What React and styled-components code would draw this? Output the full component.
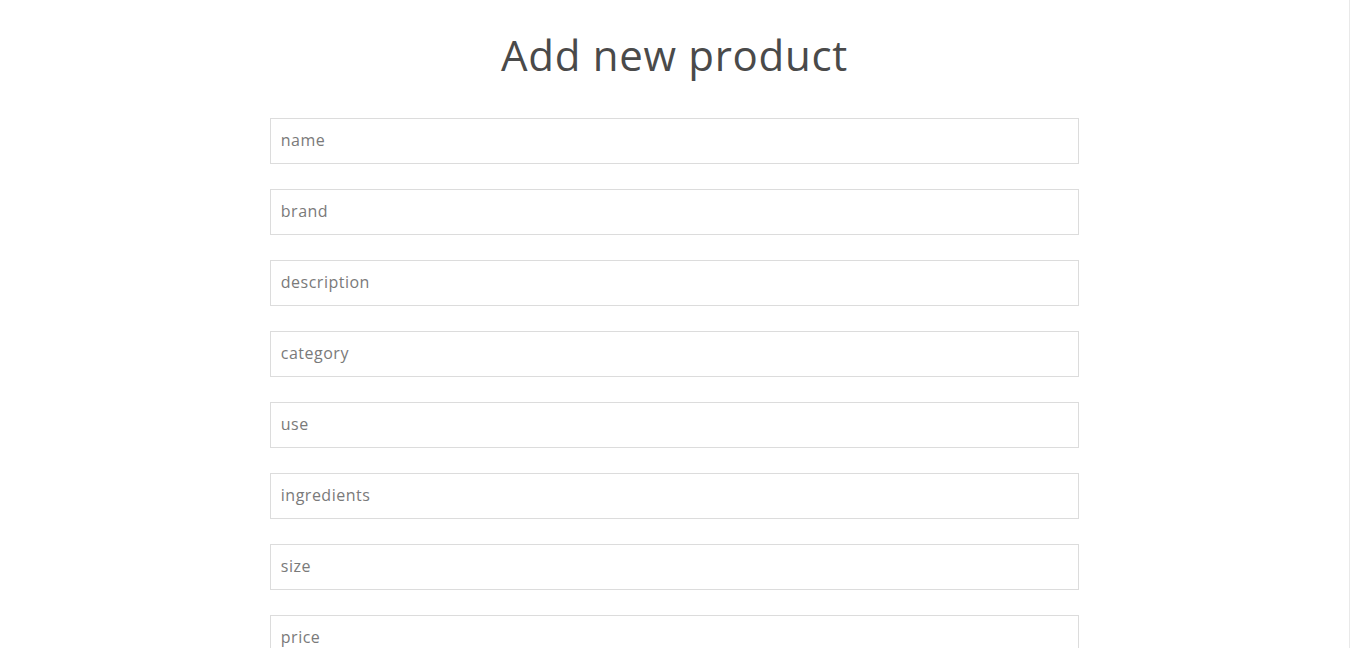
import React from 'react'
import styled, { createGlobalStyle } from 'styled-components'

const GlobalStyle = createGlobalStyle`
    body {
        margin: 0;
        font-family: "Open Sans", "Noto Sans", sans-serif;
        background: #ffffff;
    }
`;

const Page = styled.div`
    min-height: 100vh;
    border-right: 1px solid #e9e9e9;
    box-sizing: border-box;
`;

const Title = styled.h1`
    margin: 0;
    padding-top: 27px;
    font-size: 42px;
    font-weight: 400;
    line-height: 56px;
    color: #4a4a4a;
    text-align: center;
    letter-spacing: 0.7px;
`;

const Form = styled.form`
    width: 60%;
    margin: 35px auto 0;
    display: flex;
    flex-direction: column;
    gap: 25px;
    padding-bottom: 40px;
`;

const Input = styled.input`
    height: 46px;
    box-sizing: border-box;
    border: 1px solid #dcdcdc;
    padding: 0 10px 2px;
    font-family: "Open Sans", "Noto Sans", sans-serif;
    font-size: 16px;
    letter-spacing: 0.5px;
    color: #444;
    outline: none;

    &::placeholder {
        color: #7a7a7a;
    }
`;

const Button = styled.button`
    height: 46px;
    border: none;
    background: #4a4a4a;
    color: #fff;
    font-size: 16px;
    font-family: "Open Sans", "Noto Sans", sans-serif;
`;

const fields = ['name', 'brand', 'description', 'category', 'use', 'ingredients', 'size', 'price', 'stock']

const App = () => {

    return(
        <Page>
            <GlobalStyle />
            <Title>Add new product</Title>
            <Form onSubmit={e => e.preventDefault()}>
                {fields.map(f => (
                    <Input key={f} type='text' placeholder={f} />
                ))}
                <Button type='submit'>Add product</Button>
            </Form>
        </Page>
    )
}

export default App;
